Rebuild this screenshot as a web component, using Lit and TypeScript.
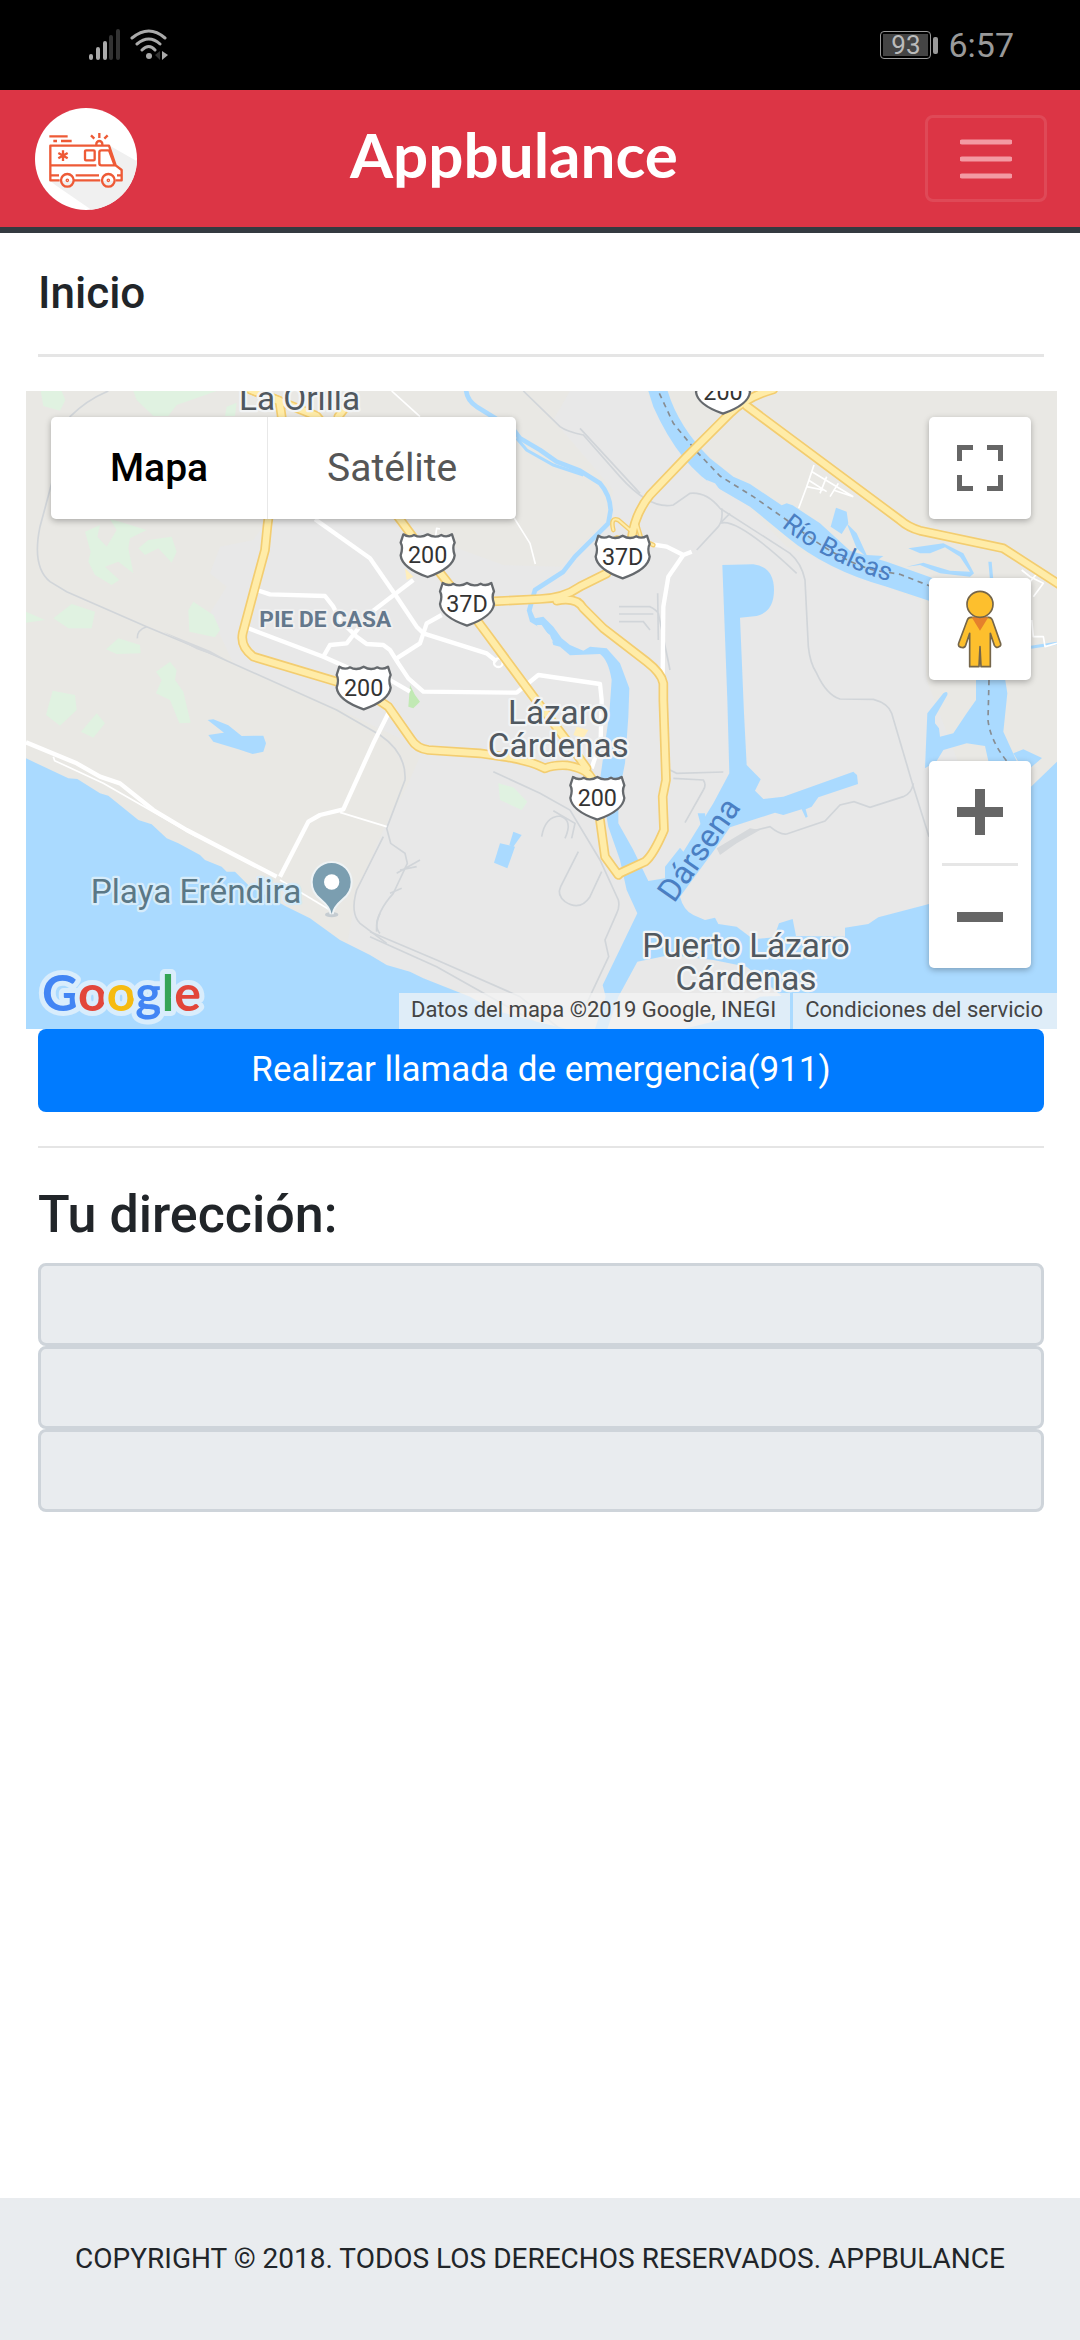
import { LitElement, html, css, svg } from "lit";
import { customElement } from "lit/decorators.js";

const SHIELD =
  "M10 3Q26 14 42 5Q62 16 83 3Q104 16 124 5Q140 14 156 3L164 28Q156 42 164 66Q160 104 83 131Q6 104 2 66Q10 42 2 28Z";

const shields = [
  { x: 1140, y: 460, label: "200" },
  { x: 1258, y: 606, label: "37D" },
  { x: 1725, y: 464, label: "37D" },
  { x: 948, y: 857, label: "200" },
  { x: 1649, y: 1188, label: "200" },
  { x: 2026, y: -30, label: "200" },
];

const highways = [
  "M690 28L778 62L785 110L760 300L742 440L735 510L700 640L668 760Q660 800 700 830L950 905L1045 940L1105 980L1175 1080Q1190 1105 1225 1110L1380 1120L1450 1130Q1530 1142 1575 1165Q1600 1154 1640 1156Q1700 1165 1715 1195L1740 1320L1755 1430L1795 1485",
  "M690 28L890 108L1050 300L1145 425L1222 530L1340 680L1400 760L1540 950L1650 1095L1700 1165",
  "M955 110L1000 50",
  "M1340 670L1420 664L1560 657Q1630 655 1680 620L1760 580",
  "M1835 475Q1845 400 1890 345L2000 230L2130 100Q2180 50 2260 28",
  "M1610 662Q1670 650 1690 685L1750 745L1880 845Q1925 880 1930 910L1930 960L1938 1200L1928 1250L1932 1350Q1900 1425 1875 1445L1795 1482",
  "M2180 78L2640 420Q2665 442 2700 452L2950 505L3120 615",
  "M1792 480L1800 525",
];
const ramps = ["M1780 450Q1770 410 1795 420L1830 450L1850 430L1865 480L1900 495"];

const streets = [
  "M710 630L750 643L915 648L940 680L960 720L1010 770L1040 792L1090 795L1110 810L1135 850L1165 895L1210 935L1490 938L1555 885L1740 912L1745 960L1742 1080L1715 1165",
  "M685 745L910 830L1000 870",
  "M910 830L930 795L980 790L1050 700L1180 600",
  "M885 418L1050 535L1130 650L1190 740L1210 760L1400 820L1430 845",
  "M1265 705L1220 730L1200 790L1130 835",
  "M1890 492L1940 500L1990 525L2015 515M1990 525L1945 590L1930 680L1928 890",
  "M18 1087L170 1150L240 1190L300 1210L400 1290L500 1350L770 1490",
  "M780 1490L865 1325L900 1305L970 1288L1060 1090L1110 990",
  "M1110 900L1170 935",
];
const lanes = [
  "M100 1130L104 1142L250 1210L530 1370",
  "M780 1500L930 1590",
  "M960 1297L1100 1340",
  "M1115 33L1200 110",
  "M1480 410L1530 490L1546 552",
  "M1245 480L1250 445L1260 447",
  "M2382 255L2360 320L2336 385M2376 275L2500 350M2365 300L2420 335M2360 320L2410 330M2420 290L2400 340M2455 310L2430 350M2500 350L2440 330",
  "M3005 570L3030 590L3070 610L3040 650M3060 570L3000 640M3035 720L3040 770L3070 770L3075 800L3111 790",
];
const rails = [
  "M265 33Q200 60 150 110L95 310L60 440Q35 560 90 605L140 635L380 740L560 815L950 990L1080 1065Q1160 1120 1155 1200L1100 1345L1112 1390L1155 1420L1162 1450L1120 1540Q1065 1600 1070 1655",
  "M380 740Q350 750 352 775",
  "M1050 1655L1250 1740L1500 1850L1620 1947M1050 1670L1250 1760L1560 1935",
  "M1090 1370L1010 1530Q990 1600 1020 1630L1100 1690M1080 1600Q1060 1640 1080 1660",
  "M1420 1175L1560 1240L1650 1290L1740 1440L1795 1560Q1800 1580 1790 1600L1755 1680L1766 1730L1700 1870",
  "M1675 1415L1622 1520Q1610 1545 1635 1565Q1680 1595 1710 1550L1745 1475",
  "M1565 1370Q1575 1310 1620 1308Q1660 1320 1635 1375M1600 1292L1665 1330L1655 1375",
  "M1510 33L1620 140Q1640 155 1690 165L1800 290Q1890 390 1960 375L2010 340Q2060 335 2100 385L2310 520Q2345 550 2355 600L2365 800Q2370 850 2390 880Q2420 945 2460 957L2560 958Q2605 970 2615 1000L2680 1220L2727 1370",
  "M1680 145L1860 340",
  "M2030 510L2095 440Q2110 420 2105 385M2100 430L2130 400M2100 430Q2150 410 2330 580",
  "M1797 680L1890 680Q1910 690 1915 700L1950 870M1797 702L1900 702M1797 725L1870 725L1890 750M1913 640L1915 780",
  "M2680 1210Q2675 1240 2650 1250L2550 1282L2502 1265L2460 1275L2415 1323L2300 1362Q2280 1365 2250 1340L2200 1352L2100 1415",
  "M1950 1170L1970 1180L2110 1176M1960 1195L2050 1200Q2060 1215 2050 1230L1995 1328",
  "M1860 1750L1885 1800L1880 1850",
  "M1130 1480L1200 1440M1140 1470L1190 1460M1110 1540L1145 1525",
];

const mapArt = svg`
  <path fill="#e8e8e8" d="M745 418L700 480L600 500L570 580L620 620L570 700L640 850L950 985L1140 1075L1200 1130L1160 1220L1090 1350L1010 1540L980 1700L1080 1760L1700 1947L3111 1947L2950 1500L2720 900L2700 660L2300 500L1900 80L1880 33L1650 33L1600 120L1780 330L1760 420L1620 560L1450 555L1300 500L1140 418Z"/>
  <g fill="#e0f2e1">
    <path d="M62 33L70 78L120 92L136 60L125 33Z M340 33L350 60L400 108L445 108L470 75L590 33Z M620 80L650 68L645 108L615 108Z"/>
    <path d="M270 418L300 425L380 450L330 475L325 505L340 580L295 545L255 560L298 600L275 615L225 585L205 545L212 515L195 455L240 435L232 470L260 500L290 450Z"/>
    <path d="M355 505L385 480L455 470L470 515L455 548L415 505L375 525Z M155 672L225 695L215 745L145 745L100 715Z M520 665L580 705L600 750L585 772L508 755L505 690Z M18 695L75 720L18 728Z M258 808L295 775L360 795L362 820L290 822Z"/>
    <path d="M408 875L450 845L470 870L465 900L490 935L512 1028L478 1030L450 960L408 940L425 900Z M98 932L165 945L170 990L120 1037L78 1005Z M230 1000L255 1030L220 1073L183 1055Z"/>
    <path d="M1435 1210L1480 1222L1522 1265L1505 1290L1440 1260Z"/>
  </g>
  <path fill="#c1e9b4" d="M1170 915L1185 945L1200 965L1180 985L1165 980Z"/>
  <path fill="#ffeebb" d="M1155 565L1180 590L1160 600Z M1670 1040L1705 1050L1690 1075L1660 1065Z"/>

  <g fill="none" stroke="#d1d5d9" stroke-width="5">${rails.map((d) => svg`<path d=${d}/>`)}</g>
  <path fill="#d5d8db" d="M430 755L570 812L620 840L530 808Z M2090 1405L2190 1345L2220 1350L2150 1390L2100 1425Z"/>

  <g fill="#aadaff">
    <path d="M18 1135L145 1195L172 1197L240 1240L265 1247L355 1320L395 1333L440 1375L475 1390L540 1425L555 1440L605 1460L620 1475L645 1475L690 1520L800 1580L870 1615L960 1680L1050 1725L1100 1755L1170 1775L1210 1795L1350 1850L1420 1890L1550 1925L1640 1947L18 1947Z"/>
    <path d="M2107 555L2200 553Q2262 560 2262 630Q2262 695 2210 708L2160 713L2172 1000L2180 1155L2222 1198L2205 1232L2230 1257L2290 1250L2500 1175L2511 1185L2514 1212L2395 1252L2375 1280L2357 1288L2363 1310L2357 1313L2345 1288L2290 1305L2265 1298L2130 1342L2090 1400L1980 1550Q1990 1590 2020 1605L2055 1620L2085 1613L2095 1632L2150 1640L2200 1678L2262 1672L2277 1630L2318 1617L2328 1668L2475 1670L2475 1643L2545 1632L2575 1612L2727 1572L2900 1420L3033 1220L3111 1145L3111 1947L1725 1947L1757 1850L1748 1815L1852 1600L1820 1530L1800 1440L1765 1340L1740 1200L1768 1000L1775 900Q1765 840 1740 822L1650 826L1620 800L1600 795L1590 765L1555 740L1530 725L1520 690L1530 680L1545 715L1570 710L1600 740L1625 775L1650 795L1690 812L1710 800L1760 805L1800 850L1828 925L1825 1010L1815 1150L1795 1250L1795 1330L1840 1410L1885 1503L1935 1495L1935 1460L1980 1403L1990 1415L2055 1310L2080 1270L2128 1180L2122 960Z"/>
    <path d="M1885 33L1943 33Q1975 140 2070 235L2140 290L2190 312L2285 376L2300 370L2318 376L2400 430L2490 512L2600 545L2727 590L2850 640L2940 800L2962 940L2950 1055L2990 1143L2905 1143L2895 1098L2840 1090L2770 1110L2750 1143L2715 1165L2722 1000L2770 940Q2785 930 2782 945L2745 1010L2745 1030L2757 1045L2760 1070L2800 1060L2840 1000L2868 960L2868 900L2830 760L2727 662L2600 620Q2420 570 2300 470L2190 380L2100 328Q1980 260 1900 80Z"/>
    <path d="M2448 383L2480 395L2485 430L2465 462L2432 440Z M2480 430L2510 460L2540 525L2590 528L2560 550L2510 505Z M2980 1120L3010 1108L3066 1134L3030 1165L2995 1145Z M563 1020L580 1018L625 1036L665 1068L730 1067L738 1090L730 1115L698 1122L655 1108L580 1085L565 1065L600 1060L612 1058Z M1440 1390L1485 1400L1462 1465L1422 1448Z M1480 1355L1505 1365L1480 1400L1468 1395Z"/>
    <path d="M2905 545L2915 545L2920 600L2910 600Z M2665 505L2770 490L2830 520L2862 580L2850 590L2760 580L2700 555L2660 560L2710 548L2790 572L2850 575L2820 530L2775 502L2730 520L2700 520Z M2033 1300L2055 1300L2060 1350L2045 1345Z"/>
  </g>
  <path fill="#e8e8e8" d="M1795 1850L1852 1745L1950 1725L2080 1740L2180 1760L2285 1848L2220 1850L2100 1920L1990 1947L1762 1947Z M2060 300L2085 310L2100 330L2075 325Z M1550 735L1565 735L1600 785L1580 780Z"/>
  <path fill="none" stroke="#aadaff" stroke-width="14" stroke-linejoin="round" d="M1338 28Q1340 60 1370 80L1480 148L1500 175L1560 210L1610 245L1680 272L1740 310Q1770 345 1772 390L1765 430L1665 530L1630 575L1545 630L1528 690"/>
  <path fill="none" stroke="#aadaff" stroke-width="9" d="M1490 175L1520 210L1600 255L1690 285M3033 802L3111 790"/>
  <path fill="none" stroke="#888d92" stroke-width="5" stroke-dasharray="16 14" d="M1918 40L1960 130L2030 215L2100 288L2200 350L2300 420Q2450 540 2560 570L2640 583L2735 620M2907 900L2904 1020Q2910 1080 2960 1143"/>

  <g fill="none" stroke="#fff" stroke-linejoin="round">
    <g stroke-width="13">${streets.map((d) => svg`<path d=${d}/>`)}</g>
    <g stroke-width="5">${lanes.map((d) => svg`<path d=${d}/>`)}</g>
    <circle cx="1435" cy="848" r="13" stroke-width="7"/>
  </g>
  <g fill="none" stroke-linejoin="round" stroke-linecap="round">
    <g stroke="#f3cd70" stroke-width="14">${ramps.map((d) => svg`<path d=${d}/>`)}</g>
    <g stroke="#f3cd70" stroke-width="29">${highways.map((d) => svg`<path d=${d}/>`)}</g>
    <g stroke="#ffeca8" stroke-width="19">${highways.map((d) => svg`<path d=${d}/>`)}</g>
    <g stroke="#ffeca8" stroke-width="6">${ramps.map((d) => svg`<path d=${d}/>`)}</g>
  </g>

  ${shields.map(
    (s) => svg`<g transform="translate(${s.x} ${s.y})">
      <path d=${SHIELD} fill="#fff" stroke="#65696d" stroke-width="7" stroke-linejoin="round"/>
      <text class="num" x="83" y="90" text-anchor="middle">${s.label}</text>
    </g>`
  )}

  <g class="place">
    <text x="657" y="91">La Orilla</text>
    <g text-anchor="middle">
      <text x="1615" y="1032">Lázaro</text>
      <text x="1615" y="1131">Cárdenas</text>
      <text x="2178" y="1730">Puerto Lázaro</text>
      <text x="2178" y="1829">Cárdenas</text>
    </g>
  </g>
  <text class="district" x="718" y="740">PIE DE CASA</text>
  <text class="beach" x="212" y="1569">Playa Eréndira</text>
  <path id="balsas" fill="none" d="M2284 440Q2420 550 2640 615"/>
  <text class="water"><textPath href="#balsas">Río Balsas</textPath></text>
  <text class="basin" transform="translate(1962 1572) rotate(-55)">Dársena</text>
  <g>
    <ellipse cx="935" cy="1604" rx="20" ry="8" fill="#c5ccd1"/>
    <path d="M935 1602Q932 1580 905 1557Q878 1537 878 1506A57 57 0 0 1 992 1506Q992 1537 965 1557Q938 1580 935 1602Z" fill="#7b9eb0" stroke="#eef3f5" stroke-width="12" paint-order="stroke"/>
    <circle cx="935" cy="1506" r="23" fill="#fff"/>
  </g>
`;

const ambulance = html`<svg class="logo" viewBox="0 0 306 306" role="img" aria-label="Appbulance">
  <defs><clipPath id="disc"><circle cx="153" cy="153" r="153"/></clipPath></defs>
  <circle cx="153" cy="153" r="153" fill="#fff"/>
  <path clip-path="url(#disc)" fill="#f0f0f0" d="M222 112L306 160V306H170L62 232L45 218Z"/>
  <path fill="#fff" d="M46 113H222L244 172L260 188V218H46Z"/>
  <g fill="none" stroke="#ee5a36" stroke-width="7" stroke-linejoin="round">
    <path d="M74 217H46V113H222L242 172L260 186V217H242M116 217H196M46 172H184M122 202H192M48 202H72M246 202H260"/>
    <path d="M184 113V108A9 9 0 0 1 202 108V113M193 75V90M168 82L178 92M218 82L208 92" />
    <path d="M43 85H98M55 99H66M78 99H110"/>
    <rect x="150" y="127" width="29" height="30" rx="3"/>
    <path d="M193 133Q193 127 199 127H222L239 172H199Q193 172 193 166Z"/>
    <path d="M84 127V159M70 135L98 151M98 135L70 151"/>
    <circle cx="97" cy="217" r="19"/><circle cx="220" cy="217" r="19"/>
    <circle cx="97" cy="217" r="2"/><circle cx="220" cy="217" r="2"/>
  </g>
</svg>`;

@customElement("app-root")
export class AppRoot extends LitElement {
  static styles = css`
    :host { display: block; font-family: Roboto, "Liberation Sans", sans-serif; color: #212529; background: #fff; }
    * { box-sizing: border-box; }
    .page { min-height: 100vh; display: flex; flex-direction: column; }
    button { font: inherit; border: 0; padding: 0; background: none; color: inherit; }
    svg { display: block; }

    .status { height: 90px; padding: 0 66px 0 88px; background: #000; color: #999; display: flex; align-items: center; justify-content: space-between; }
    .status-side { display: flex; align-items: center; gap: 10px; }
    .battery { display: flex; align-items: center; gap: 2px; }
    .cell { width: 51px; height: 28px; padding: 2px; border: 1px solid #999; border-radius: 4px; }
    .level { height: 22px; background: #444; color: #bbb; font-size: 26px; line-height: 22px; text-align: center; }
    .nub { width: 5px; height: 17px; border-radius: 2px; background: #999; }
    .clock { font-size: 34px; line-height: 44px; }

    .bar { height: 143px; padding: 0 33px 0 35px; background: #dc3545; border-bottom: 6px solid #343a40; display: flex; align-items: center; justify-content: space-between; }
    .logo { width: 102px; height: 102px; }
    .brand { color: #fff; font-family: Lato, Roboto, sans-serif; font-weight: 700; font-size: 62px; line-height: 72px; text-decoration: none; padding: 0 34px 10px 0; }
    .toggler { width: 122px; height: 87px; border: 3px solid rgba(255, 255, 255, 0.1); border-radius: 8px; display: grid; place-items: center; }

    main { flex: 1; padding: 0 36px 0 38px; display: flex; flex-direction: column; }
    h1, h2 { margin: 0; font-weight: 500; }
    h1 { font-size: 44px; line-height: 50px; padding: 35px 0 36px; }
    h2 { font-size: 52px; line-height: 62px; padding: 36px 0 17px; }
    hr { width: 100%; margin: 0; border: 0; border-top: 3px solid #e5e5e5; }
    .map { position: relative; height: 638px; margin: 34px -13px 0 -12px; overflow: hidden; background: #e9e8e4; }
    .canvas { width: 100%; height: 100%; }
    .num { font-size: 70px; fill: #333; }
    .place, .beach { font-size: 100px; fill: #50585f; stroke: #f2f4f5; stroke-width: 14px; paint-order: stroke; stroke-linejoin: round; }
    .beach { fill: #5b7886; stroke: #d6ecfa; }
    .district { font-size: 68px; font-weight: 700; fill: #64788c; stroke: #f0f0f0; stroke-width: 12px; paint-order: stroke; stroke-linejoin: round; }
    .water { font-size: 78px; fill: #4a7fc3; }
    .basin { font-size: 96px; fill: #4a7fc3; }

    .panel { background: #fff; border-radius: 5px; box-shadow: 0 2px 6px rgba(0, 0, 0, 0.28); position: absolute; overflow: hidden; }
    .types { left: 25px; top: 26px; display: flex; height: 102px; font-size: 39px; color: #565656; }
    .types button { padding: 0 59px; }
    .types .on { color: #000; font-weight: 500; border-right: 1px solid #e8e8e8; }
    .square { right: 26px; width: 102px; height: 102px; display: grid; place-items: center; }
    .full { top: 26px; }
    .peg { top: 187px; }
    .zoom { right: 26px; bottom: 61px; width: 102px; display: flex; flex-direction: column; align-items: center; }
    .zoom button { width: 102px; height: 102px; display: grid; place-items: center; }
    .rule { width: 76px; height: 3px; background: #e6e6e6; }
    .google { position: absolute; left: 16px; bottom: 0; font-family: Lato, sans-serif; text-decoration: none; }
    .google svg { overflow: visible; }
    .google text { font-size: 50px; font-weight: 700; stroke: #d9edfc; stroke-width: 10px; paint-order: stroke; stroke-linejoin: round; }
    .credits { position: absolute; right: 0; bottom: 0; display: flex; gap: 3px; font-size: 22px; line-height: 34px; color: #444; }
    .credits > * { background: rgba(245, 245, 245, 0.7); padding: 0 14px 2px 12px; white-space: nowrap; color: inherit; text-decoration: none; }

    .call { height: 83px; padding-bottom: 2px; border-radius: 8px; background: #007bff; color: #fff; font-size: 35px; }
    .thin { margin-top: 34px; border-top: 2px solid #e5e5e5; }
    .fields { display: flex; flex-direction: column; }
    .fields input { width: 100%; height: 83px; padding: 0 30px; border: 3px solid #ced4da; border-radius: 8px; background: #e9ecef; font: inherit; font-size: 35px; color: #495057; }
    footer { height: 142px; background: #e9ecef; padding: 40px 0; text-align: center; font-size: 28px; line-height: 42px; }
  `;

  render() {
    return html`<div class="page">
      <div class="status">
        <div class="status-side">
          <svg width="32" height="32" viewBox="0 0 32 32" stroke-width="4" stroke-linecap="round">
            <path stroke="#aaa" d="M3 27V29M10 20V29M17 14V29"/><path stroke="#333" d="M23 8V29M30 2V29"/>
          </svg>
          <svg width="38" height="32" viewBox="0 0 38 32" fill="none" stroke="#aaa" stroke-width="3" stroke-linecap="round">
            <path d="M2 9Q19 -5 35 9M7 15Q19 5 30 15M12 21Q19 14 25 21"/>
            <circle cx="19" cy="27" r="3" fill="#aaa" stroke="none"/><path d="M30 22V31L25 26Z" fill="#333" stroke="none"/><path d="M32 22V31L38 26Z" fill="#aaa" stroke="none"/>
          </svg>
        </div>
        <div class="status-side">
          <div class="battery"><div class="cell"><div class="level">93</div></div><div class="nub"></div></div>
          <span class="clock">6:57</span>
        </div>
      </div>
      <header class="bar">
        ${ambulance}
        <a class="brand" href="#">Appbulance</a>
        <button class="toggler" aria-label="Menú">
          <svg width="52" height="40" viewBox="0 0 52 40" stroke="#f39aa3" stroke-width="5" stroke-linecap="round"><path d="M2 3H50M2 20H50M2 37H50"/></svg>
        </button>
      </header>
      <main>
        <h1>Inicio</h1>
        <hr />
        <div class="map">
          <svg class="canvas" viewBox="18 33 3093 1914" preserveAspectRatio="xMidYMid slice">${mapArt}</svg>
          <div class="panel types"><button class="on">Mapa</button><button>Satélite</button></div>
          <button class="panel square full" aria-label="Pantalla completa">
            <svg width="46" height="46" viewBox="0 0 46 46" fill="#666"><path d="M0 0H16V5H5V16H0ZM30 0H46V16H41V5H30ZM0 30H5V41H16V46H0ZM41 30H46V46H30V41H41Z"/></svg>
          </button>
          <button class="panel square peg" aria-label="Street View">
            <svg width="46" height="78" viewBox="0 0 138 234" stroke="#75664a" stroke-width="5" stroke-linejoin="round">
              <path fill="#fdbf2d" d="M42 82Q34 82 31 90L5 160Q2 170 12 172Q22 176 26 166L38 130V230H66L69 170L72 230H100V130L112 166Q118 176 126 170Q134 168 130 158L106 90Q102 82 95 82Z"/>
              <path fill="#e5802c" stroke="none" d="M44 82H94L69 122Z"/>
              <circle cx="69" cy="43" r="39" fill="#fdbf2d"/>
            </svg>
          </button>
          <div class="panel zoom">
            <button aria-label="Acercar"><svg width="46" height="46" viewBox="0 0 46 46" fill="#666"><path d="M18 0H28V18H46V28H28V46H18V28H0V18H18Z"/></svg></button>
            <div class="rule"></div>
            <button aria-label="Alejar"><svg width="46" height="10" viewBox="0 0 46 10" fill="#666"><path d="M0 0H46V10H0Z"/></svg></button>
          </div>
          <a class="google" href="#" aria-label="Google">
            <svg width="160" height="60"><text x="0" y="42"><tspan fill="#4285f4">G</tspan><tspan fill="#e2463a">o</tspan><tspan fill="#f6bb10">o</tspan><tspan fill="#4285f4">g</tspan><tspan fill="#35a555">l</tspan><tspan fill="#e2463a">e</tspan></text></svg>
          </a>
          <div class="credits"><span>Datos del mapa ©2019 Google, INEGI</span><a href="#">Condiciones del servicio</a></div>
        </div>
        <button class="call">Realizar llamada de emergencia(911)</button>
        <hr class="thin" />
        <h2 id="dir">Tu dirección:</h2>
        <div class="fields" role="group" aria-labelledby="dir">
          <input type="text" readonly aria-label="Dirección, línea 1" />
          <input type="text" readonly aria-label="Dirección, línea 2" />
          <input type="text" readonly aria-label="Dirección, línea 3" />
        </div>
      </main>
      <footer>COPYRIGHT © 2018. TODOS LOS DERECHOS RESERVADOS. APPBULANCE</footer>
    </div>`;
  }
}
